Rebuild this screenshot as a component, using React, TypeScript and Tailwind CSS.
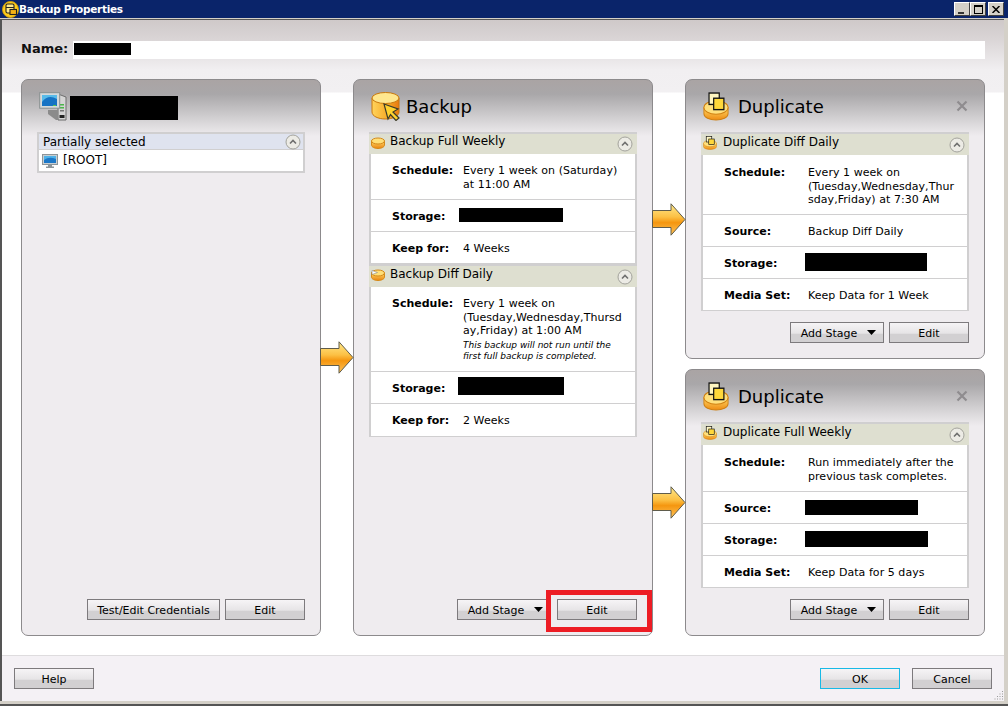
import React from "react";

const Chevron = () => (
  <svg width="16" height="16" viewBox="0 0 16 16" className="shrink-0">
    <circle cx="8" cy="8" r="7" fill="#eceBe5" stroke="#a3a39c" />
    <path d="M5 9.500 8 6.500 11 9.500" fill="none" stroke="#6f6f6f" strokeWidth="1.600" />
  </svg>
);

const Arrow = () => (
  <svg width="34" height="33" viewBox="0 0 34 33" className="shrink-0 relative z-10">
    <defs>
      <linearGradient id="arw" x1="0" y1="0" x2="0" y2="1">
        <stop offset="0" stopColor="#ffe98c" />
        <stop offset="0.42" stopColor="#fcc044" />
        <stop offset="0.6" stopColor="#f5960f" />
        <stop offset="1" stopColor="#fec45c" />
      </linearGradient>
    </defs>
    <path d="M.5 7.500H19V.8L33 16.500 19 32.200V24.500H.5Z" fill="url(#arw)" stroke="#5f5c4c" />
  </svg>
);

const BackupIcon = () => (
  <svg width={30} height={30} viewBox="0 0 30 30" className="shrink-0">
    <defs>
      <linearGradient id="bk" x1="0" y1="0" x2="1" y2="0">
        <stop offset="0" stopColor="#ffd35c" />
        <stop offset="0.6" stopColor="#f7a925" />
        <stop offset="1" stopColor="#e87810" />
      </linearGradient>
    </defs>
    <path d="M1 7v14c0 4 6 7 13.500 7s13.500-3 13.500-7V7Z" fill="url(#bk)" stroke="#c9780c" />
    <ellipse cx="14.500" cy="7" rx="13.500" ry="5.500" fill="#ffe78e" stroke="#c9780c" />
    <path d="M13 13 27 18 22 21 28 27 25 29.500 19.500 23.500 17 28Z" fill="#ffd22e" stroke="#3a3a2a" strokeWidth="1.200" />
  </svg>
);

const DupIcon = ({ w, h, id }: { w: number; h: number; id: string }) => (
  <svg width={w} height={h} viewBox="0 0 28 28" preserveAspectRatio="none" className="shrink-0">
    <defs>
      <linearGradient id={id} x1="0" y1="0" x2="0" y2="1">
        <stop offset="0" stopColor="#ffd967" />
        <stop offset="1" stopColor="#ee8c14" />
      </linearGradient>
    </defs>
    <path d="M1 15v6c0 3.500 6 6 13 6s13-2.500 13-6v-6Z" fill={`url(#${id})`} stroke="#d08012" />
    <ellipse cx="14" cy="15" rx="13" ry="6.500" fill="#ffe07c" stroke="#d08012" />
    <rect x="6.500" y="1" width="11" height="11" fill="#fff7c2" stroke="#111" strokeWidth="1.300" />
    <rect x="11.500" y="6" width="11" height="11" fill="#ffd83a" stroke="#111" strokeWidth="1.300" />
  </svg>
);

const SmallDisc = ({ id, cut }: { id: string; cut?: boolean }) => (
  <svg width="14" height="12" viewBox="0 0 14 12" className="shrink-0">
    <defs>
      <linearGradient id={id} x1="0" y1="0" x2="0" y2="1">
        <stop offset="0" stopColor="#ffd967" />
        <stop offset="1" stopColor="#ea8410" />
      </linearGradient>
    </defs>
    <path d="M.5 4v4c0 2 3 3.500 6.500 3.500s6.500-1.500 6.500-3.500V4Z" fill={`url(#${id})`} stroke="#d48a1a" />
    <ellipse cx="7" cy="4" rx="6.500" ry="3" fill="#ffdf78" stroke="#d48a1a" />
    {cut && <path d="M1 1.500 6.500 3.500 1 5.500Z" fill="#fff" stroke="#8a8a8a" strokeWidth=".6" />}
  </svg>
);

const Monitor = () => (
  <svg width="16" height="14" viewBox="0 0 16 14" className="shrink-0">
    <rect x=".5" y=".5" width="15" height="10" fill="#c9cfd2" stroke="#8d9599" />
    <rect x="2" y="2" width="12" height="7" fill="#1c78c8" />
    <path d="M2 6Q7 2 14 5V2H2Z" fill="#4fb2e8" />
    <path d="M6 11h4v1.500h2V14H4v-1.500h2Z" fill="#8d9599" />
  </svg>
);

const Computer = () => (
  <svg width="28" height="29" viewBox="0 0 28 29" className="shrink-0">
    <path d="M19 2 27 5V28H19Z" fill="#d5d5d5" stroke="#6d6d6d" />
    <rect x="21" y="12" width="4" height="1.500" fill="#49b649" />
    <rect x="21" y="15" width="4" height="1.500" fill="#49b649" />
    <rect x="21" y="18" width="4" height="1.500" fill="#777" />
    <rect x="20.500" y="23" width="5" height="3" fill="#222" />
    <path d="M9 18h10v10h-2L9 22Z" fill="#8b8b8b" />
    <rect x=".7" y=".7" width="20" height="15.500" fill="#d5dadb" stroke="#888f90" />
    <rect x="3" y="3" width="15" height="11" fill="#1673c4" />
    <path d="M3 10Q9 2 18 7V3H3Z" fill="#57bbe9" />
    <rect x="14" y="13" width="3" height="1" fill="#53c653" />
  </svg>
);

const AppIcon = () => (
  <svg width="17" height="17" viewBox="0 0 17 17" className="shrink-0">
    <circle cx="8.500" cy="8.500" r="8" fill="#ffcc1a" stroke="#c99a10" />
    <rect x="4" y="3" width="8" height="9" rx="1.500" fill="#ffe98a" stroke="#222" strokeWidth="1.100" />
    <path d="M4 6.500h8" stroke="#222" />
    <rect x="8" y="8.500" width="6.500" height="5" fill="#f4b216" stroke="#222" strokeWidth="1.100" />
  </svg>
);

const Redact = ({ w, h, ml, mt }: { w: number; h: number; ml?: number; mt?: number }) => (
  <div className="bg-black shrink-0" style={{ width: w, height: h, marginLeft: ml ?? 0, marginTop: mt ?? 0 }} />
);

const Btn = ({ w, children, ok }: { w: number; children: React.ReactNode; ok?: boolean }) => (
  <div
    className={`h-[21px] shrink-0 border ${ok ? "border-[#18b9e6]" : "border-[#7d7a7d]"} bg-[linear-gradient(#f6f4f6_0%,#e6e4e6_55%,#d2d0d2_56%,#d2d0d2_100%)] flex items-center justify-center pt-[3px] text-[11px] text-black`}
    style={{ width: w }}
  >
    {children}
  </div>
);

const AddStage = () => (
  <Btn w={94}>
    <span className="ml-[3px]">Add Stage</span>
    <svg width="9" height="5" viewBox="0 0 9 5" className="ml-[10px] -mt-[3px]">
      <path d="M0 0h9L4.500 5Z" fill="#000" />
    </svg>
  </Btn>
);

type Row = { label: string; h: number; value?: React.ReactNode; redact?: [number, number, number, number]; top?: number };

const Card = ({ title, icon, rows, valueLeft, hh, iconW }: { title: string; icon: React.ReactNode; rows: Row[]; valueLeft: number; hh: number; iconW?: number }) => (
  <div className="border-x-2 border-[#d0cfd0]">
    <div className="-mx-[2px] bg-[#dedfd0] border-t-2 border-[#d0cfd0] flex items-center pl-[2px] pr-[4px]" style={{ height: hh }}>
      <div className="flex justify-start -mt-[3px]" style={{ width: iconW ?? 18 }}>{icon}</div>
      <span className="text-[12px] -mt-[6px] ml-[1px] leading-none">{title}</span>
      <div className="ml-auto">
        <Chevron />
      </div>
    </div>
    {rows.map((r, i) => (
      <div
        key={i}
        className="bg-white border-b border-[#d0cfd0] flex pl-[21px] text-[11px] leading-[13.5px] text-black items-start"
        style={{ height: r.h, paddingTop: r.top ?? 10 }}
      >
        <span className="font-bold shrink-0" style={{ width: valueLeft }}>{r.label}</span>
        {r.redact ? <Redact w={r.redact[0]} h={r.redact[1]} ml={r.redact[2]} mt={r.redact[3]} /> : <div className="tracking-[0.05px]">{r.value}</div>}
      </div>
    ))}
  </div>
);

const Panel = ({ title, icon, children, footer, close, className, titleMl }: { title: React.ReactNode; icon: React.ReactNode; children: React.ReactNode; footer: React.ReactNode; close?: boolean; className?: string; titleMl?: number }) => (
  <div className={`w-[300px] flex flex-col rounded-[7px] border border-[#8c8a8c] bg-[linear-gradient(#aaa4a4_0px,#a9a7a9_14px,#d5d3d5_40px,#efecef_56px)] px-[15px] ${className ?? ""}`}>
    <div className="h-[52px] shrink-0 flex items-center relative pl-[2px]">
      {icon}
      {typeof title === "string" ? <span className="text-[18px] mt-[2px] text-black leading-none" style={{ marginLeft: titleMl ?? 5 }}>{title}</span> : title}
      {close && (
        <svg width="12" height="12" viewBox="0 0 12 12" className="absolute right-[1px] top-[20px]">
          <path d="M1.500 1.500 10.500 10.500M10.500 1.500 1.500 10.500" stroke="#8f8c8f" strokeWidth="2.200" />
        </svg>
      )}
    </div>
    <div className="flex-1">{children}</div>
    <div className="flex justify-end gap-[5px] pb-[15px]">{footer}</div>
  </div>
);

export default function App() {
  const font = { fontFamily: '"DejaVu Sans", Verdana, sans-serif' };
  return (
    <div className="w-[1008px] h-[706px] overflow-hidden bg-[#d4d0c8] flex flex-col relative" style={font}>
      <div className="h-[18px] shrink-0 bg-[#0a246a] flex items-center pl-[2px]">
        <AppIcon />
        <span className="text-[10.5px] font-bold text-white pt-[1px] tracking-[-0.3px]">Backup Properties</span>
        <div className="ml-auto mr-[4px] flex items-center">
          {["min", "max", "close"].map((k, i) => (
            <div key={k} className={`w-[16px] h-[14px] bg-[#d4d0c8] border-t border-l border-t-white border-l-white border-r border-b border-r-[#404040] border-b-[#404040] flex items-center justify-center ${i === 2 ? "ml-[2px]" : ""}`}>
              {k === "min" && <div className="w-[6px] h-[2px] bg-[#333] mt-[7px] -ml-[2px]" />}
              {k === "max" && <div className="w-[9px] h-[9px] border border-black border-t-2" />}
              {k === "close" && (
                <svg width="8" height="7" viewBox="0 0 8 7">
                  <path d="M.5 0 7.500 7M7.500 0 .5 7" stroke="#000" strokeWidth="1.500" />
                </svg>
              )}
            </div>
          ))}
        </div>
      </div>
      <div className="h-[1px] bg-[#d4d0c8] shrink-0" />
      <div className="flex-1 flex flex-col mr-[4px] border-t border-l-2 border-t-[#555] border-l-[#555] bg-[linear-gradient(#cfc9c9_0px,#d9d4d5_18px,#f1eff1_50px,#f2f0f2_72px,#ffffff_73px)] min-h-0">
        <div className="h-[39px] shrink-0 pt-[21px] px-[19px] flex items-start">
          <span className="text-[13px] font-bold w-[52px] leading-[15px] text-[#111]">Name:</span>
          <div className="flex-1 h-[18px] bg-white flex items-start pt-[2px] pl-[1px]">
            <Redact w={57} h={12} />
          </div>
        </div>
        <div className="flex px-[19px] pt-[20px] h-[596px] items-stretch shrink-0 -mb-[20px]">
          <Panel
            title={<Redact w={108} h={24} ml={3} mt={4} />}
            icon={<Computer />}
            footer={
              <>
                <Btn w={133}>Test/Edit Credentials</Btn>
                <Btn w={80}>Edit</Btn>
              </>
            }
            className="h-[557px]"
          >
            <div className="border-2 border-[#d0cfd0] bg-white">
              <div className="h-[16px] bg-[#dfe3ef] flex items-center pl-[4px] pr-[2px] text-[12px] border-b border-[#d0cfd0]">
                Partially selected
                <div className="ml-auto"><Chevron /></div>
              </div>
              <div className="h-[21px] flex items-center pl-[3px] text-[12px]">
                <Monitor />
                <span className="ml-[5px] -mt-[1px]">[ROOT]</span>
              </div>
            </div>
          </Panel>
          <div className="w-[32px] h-[557px] flex items-center justify-center">
            <Arrow />
          </div>
          <Panel
            title="Backup"
            icon={<BackupIcon />}
            footer={
              <>
                <AddStage />
                <div className="ml-[1px]"><Btn w={80}>Edit</Btn></div>
              </>
            }
            className="h-[557px]"
          >
            <Card
              title="Backup Full Weekly"
              icon={<SmallDisc id="s1" />}
              valueLeft={71}
              hh={22}
              rows={[
                { label: "Schedule:", h: 46, top: 10, value: <>Every 1 week on (Saturday)<br />at 11:00 AM</> },
                { label: "Storage:", h: 32, redact: [104, 14, -4, -2] },
                { label: "Keep for:", h: 32, value: "4 Weeks" },
              ]}
            />
            <Card
              title="Backup Diff Daily"
              icon={<SmallDisc id="s2" cut />}
              valueLeft={71}
              hh={23}
              rows={[
                {
                  label: "Schedule:",
                  h: 85,
                  top: 10,
                  value: (
                    <>
                      Every 1 week on<br />(Tuesday,Wednesday,Thursd<br />ay,Friday) at 1:00 AM
                      <div className="text-[9px] italic leading-[11px] mt-[2px] tracking-normal">This backup will not run until the<br />first full backup is completed.</div>
                    </>
                  ),
                },
                { label: "Storage:", h: 32, redact: [106, 18, -5, -5] },
                { label: "Keep for:", h: 33, value: "2 Weeks" },
              ]}
            />
          </Panel>
          <div className="flex flex-col gap-[10px] h-[557px]">
            <div className="flex h-[280px] items-center">
              <div className="w-[32px] flex justify-center"><Arrow /></div>
              <Panel
                title="Duplicate"
                titleMl={9}
                icon={<DupIcon w={26} h={29} id="d1" />}
                close
                footer={
                  <>
                    <AddStage />
                    <Btn w={80}>Edit</Btn>
                  </>
                }
                className="h-[280px]"
              >
                <Card
                  title="Duplicate Diff Daily"
                  icon={<DupIcon w={14} h={14} id="d2" />}
                  iconW={19}
                  valueLeft={84}
                  hh={23}
                  rows={[
                    { label: "Schedule:", h: 60, top: 11, value: <>Every 1 week on<br />(Tuesday,Wednesday,Thur<br />sday,Friday) at 7:30 AM</> },
                    { label: "Source:", h: 32, value: "Backup Diff Daily" },
                    { label: "Storage:", h: 32, redact: [122, 18, -3, -4] },
                    { label: "Media Set:", h: 32, value: "Keep Data for 1 Week" },
                  ]}
                />
              </Panel>
            </div>
            <div className="flex h-[267px] items-center">
              <div className="w-[32px] flex justify-center"><Arrow /></div>
              <Panel
                title="Duplicate"
                titleMl={9}
                icon={<DupIcon w={26} h={29} id="d3" />}
                close
                footer={
                  <>
                    <AddStage />
                    <Btn w={80}>Edit</Btn>
                  </>
                }
                className="h-[267px]"
              >
                <Card
                  title="Duplicate Full Weekly"
                  icon={<DupIcon w={14} h={14} id="d4" />}
                  iconW={19}
                  valueLeft={84}
                  hh={23}
                  rows={[
                    { label: "Schedule:", h: 47, top: 11, value: <>Run immediately after the<br />previous task completes.</> },
                    { label: "Source:", h: 32, redact: [113, 15, -3, -2] },
                    { label: "Storage:", h: 32, redact: [123, 16, -3, -3] },
                    { label: "Media Set:", h: 32, value: "Keep Data for 5 days" },
                  ]}
                />
              </Panel>
            </div>
          </div>
        </div>
        <div className="flex-1" />
        <div className="h-[46px] shrink-0 bg-[#f4f1f5] border-t border-[#dedcde] flex items-start pt-[12px] px-[12px] relative">
          <Btn w={80}>Help</Btn>
          <div className="ml-auto"><Btn w={80} ok>OK</Btn></div>
          <div className="ml-[12px]"><Btn w={80}>Cancel</Btn></div>
          <svg width="11" height="11" viewBox="0 0 11 11" className="absolute right-0 bottom-0">
            {[[9, 1], [9, 3.500], [6.500, 3.500], [9, 6], [6.500, 6], [4, 6], [9, 8.500], [6.500, 8.500], [4, 8.500], [1.500, 8.500]].map(([x, y], i) => (
              <rect key={i} x={x} y={y} width="1" height="1" fill="#9a9a9a" />
            ))}
          </svg>
        </div>
      </div>
      <div className="h-[5px] shrink-0 bg-[#d4d0c8] border-b-2 border-[#555]" />
      <div className="absolute left-[546px] top-[590px] w-[106px] h-[42px] border-[5px] border-[#ed1c24]" />
    </div>
  );
}
